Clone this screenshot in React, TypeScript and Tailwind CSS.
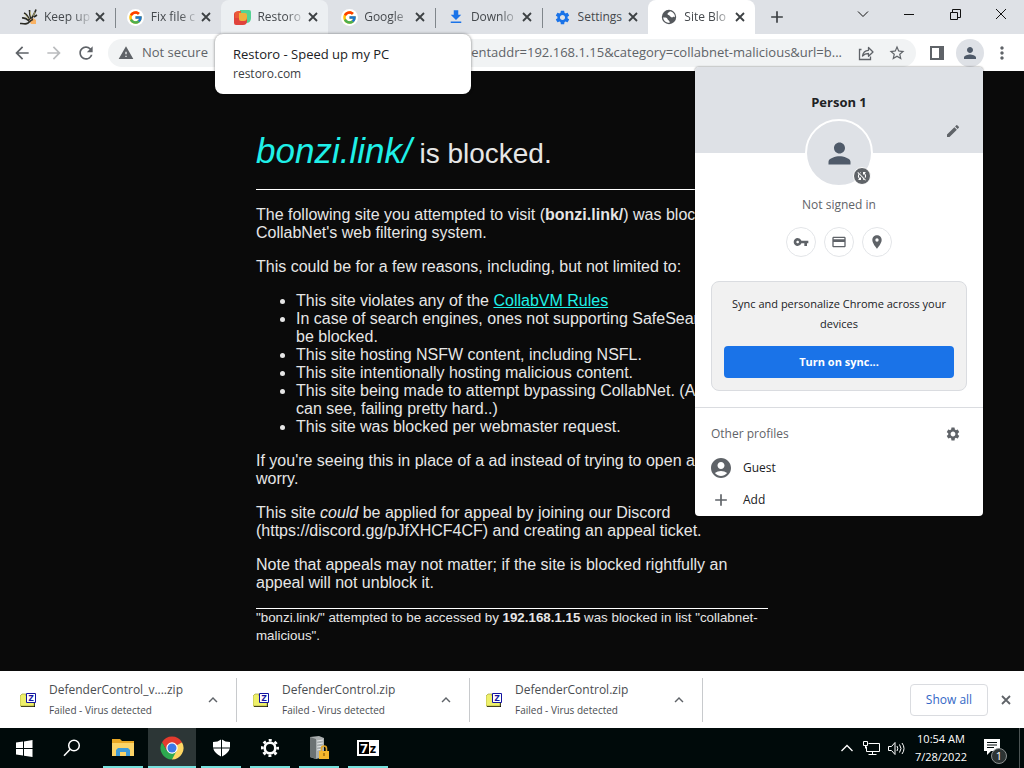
import React from 'react';
import { FcGoogle } from 'react-icons/fc';
import {
  MdAccountCircle, MdAdd, MdArrowBack, MdArrowForward, MdCreditCard, MdEdit, MdFileDownload,
  MdLocationOn, MdMoreVert, MdPerson, MdRefresh, MdSettings, MdStarBorder, MdSyncDisabled,
  MdVpnKey, MdWarning, MdExpandLess
} from 'react-icons/md';

const CloseIcon = () => (
  <svg width="14" height="14" viewBox="0 0 14 14" stroke="currentColor" strokeWidth="1.800">
    <path d="M3 3l8 8M11 3l-8 8" />
  </svg>
);

const GlobeIcon = () => (
  <svg width="16" height="16" viewBox="0 0 16 16">
    <circle cx="8" cy="8" r="7.200" fill="#54585c" />
    <path d="M2 8.500c2 0 4-.3 4.500 1.500S9 11 8.500 14Q3 13.500 2 8.500zM9 2.200c-.5 1.500-2.500 1-2.500 2.800 0 1.200 2 1 2.500 2s2 2 3 1 1.800.5 2 .2Q14 3.500 9 2.200z" fill="#fff" />
  </svg>
);

const BonsaiIcon = () => (
  <svg width="18" height="18" viewBox="0 0 18 18" fill="none">
    <path d="M9 12l4-2 3 2v4h-5z" fill="#f9b264" />
    <path d="M0 15.500c4-.5 5 1.500 8-.5 2-1.500 3-3 5-3.500M2 10c3-.5 5 1 7 3M4 5c3 1 4 4 5.500 7M9.500 2c0 4 .5 6 1.500 9M16 1.500c-1 4-3 5-4 9M14 9l3-2" stroke="#2a2a24" strokeWidth="1.600" />
    <path d="M4.500 6.500c2 1 3 3 4 4.500M10.200 3.500l.8 5M15 4l-2 4" stroke="#e3d98a" strokeWidth=".7" />
  </svg>
);

const RestoroIcon = () => (
  <svg width="17" height="17" viewBox="0 0 17 17">
    <path d="M6 1h9q2 0 2 2v6q0 5-5 5H6z" fill="#55d393" />
    <path d="M2 3h5v5h6v4q0 4-4 4H2q-2 0-2-2V5q0-2 2-2z" fill="#e0433c" />
    <path d="M4 2h3v7H1V5q0-3 3-3z" fill="#ea5a38" />
    <path d="M5 4h6q2 0 2 2v2q0 4-3 4H7q-2 0-2-2z" fill="#efb13d" />
  </svg>
);

const ShareIcon = () => (
  <svg width="16" height="16" viewBox="0 0 16 16" fill="none" stroke="#5f6368" strokeWidth="1.3">
    <path d="M3.500 4.500H1.500v10h11v-3" />
    <path d="M4.500 11c.5-4 2.500-5.500 6-5.700V2.500L15 7l-4.500 4.200V8.500C8 8.500 6 9.200 4.500 11z" strokeLinejoin="round" />
  </svg>
);

const ZipIcon = () => (
  <span className="relative block h-4 w-4">
    <svg width="16" height="16" viewBox="0 0 16 16">
      <path d="M1 15V4l2-2h4v2h8v11z" fill="#111" />
      <path d="M0 14V4l2-2h4v2h8v10z" fill="#eef06a" stroke="#a5a43a" strokeWidth=".7" />
      <path d="M6.500 1.500h9v9h-9z" fill="#fff" stroke="#1414a0" />
    </svg>
    <span className="absolute top-0.5 right-0 w-2.5 text-center text-[9px] leading-2 font-bold text-[#1414a0]">Z</span>
  </span>
);

const WindowsIcon = () => (
  <svg width="17" height="17" viewBox="0 0 17 17" fill="#fff">
    <path d="M0 2.500l7-1V8H0zM8 1.400L16.500 0v8H8zM0 9h7v6.500l-7-1zM8 9h8.500v8L8 15.700z" />
  </svg>
);

const SearchIcon = () => (
  <svg width="18" height="18" viewBox="0 0 18 18" fill="none" stroke="#fff" strokeWidth="1.5">
    <circle cx="11" cy="6.500" r="5.300" />
    <path d="M7.200 10.300L1 16.800" />
  </svg>
);

const FolderIcon = () => (
  <svg width="22" height="20" viewBox="0 0 22 20">
    <path d="M0 1h8l2 2h12v15H0z" fill="#e9a825" />
    <path d="M0 5h22v13H0z" fill="#fcd467" />
    <path d="M4 18v-6l2-2h10l2 2v6h-4v-4H8v4z" fill="#3f9bd8" />
  </svg>
);

const ChromeIcon = () => (
  <svg width="24" height="24" viewBox="0 0 24 24">
    <path d="M12 12L2.040 6.250A11.500 11.500 0 0 1 21.960 6.250z" fill="#e33b2e" />
    <path d="M12 12L21.960 6.250A11.500 11.500 0 0 1 12 23.500z" fill="#fdd663" />
    <path d="M2.040 6.250L7 14.900 12 12V6.500h9.960L22 6.250 12 4z" fill="#e33b2e" />
    <path d="M2.040 6.250L7 14.900l5 2.600 4.500-2.500L12 23.500A11.500 11.500 0 0 1 2.040 6.250z" fill="#2da94f" />
    <circle cx="12" cy="12" r="5.700" fill="#fff" />
    <circle cx="12" cy="12" r="4.500" fill="#3b79e8" />
  </svg>
);

const ShieldIcon = () => (
  <svg width="17" height="18" viewBox="0 0 17 18" fill="#fff">
    <path d="M0 3q5 0 8-2.500V8.500H0zM9 .5Q12 3 17 3v5.500H9zM.2 9.500H8v8Q1.500 14 .2 9.500zM9 9.500h7.800Q15.500 14 9 17.500z" />
  </svg>
);

const GearIcon = () => (
  <svg width="20" height="20" viewBox="-10 -10 20 20" fill="none" stroke="#fff">
    <circle r="5.300" strokeWidth="2.600" />
    <circle r="7.700" strokeWidth="2.600" strokeDasharray="3 3.047" strokeDashoffset="1.500" />
  </svg>
);

const ServerIcon = () => (
  <svg width="22" height="24" viewBox="0 0 22 24">
    <path d="M2 1l9-1 5 2v19l-8 2-6-2z" fill="#a9aeaf" />
    <path d="M2 1l6 2v20l-6-2z" fill="#6c7273" />
    <path d="M9 5l6-1M9 8l6-1M9 11l6-1M9 14l5-1" stroke="#e4e7e7" />
    <path d="M13.500 15v-2.500a2.500 2.500 0 0 1 5 0V15" fill="none" stroke="#e0a526" strokeWidth="1.600" />
    <path d="M11 15h10v8H11z" fill="#f3b62c" />
    <path d="M16 17v3" stroke="#9c6b10" strokeWidth="1.500" />
  </svg>
);

const SevenZipIcon = () => (
  <span className="flex h-4 w-[22px] items-center border-2 border-white bg-white">
    <span className="h-full w-2.5 bg-black text-center text-[13px] leading-3 font-bold text-white">7</span>
    <span className="h-full flex-1 text-center text-[13px] leading-3 font-bold text-black">z</span>
  </span>
);

const tabs = [
  { title: 'Keep up', icon: <BonsaiIcon /> },
  { title: 'Fix file c', icon: <span className="rounded-full bg-white p-px"><FcGoogle size={15} /></span>, divider: true },
  { title: 'Restoro', icon: <RestoroIcon />, hovered: true },
  { title: 'Google', icon: <span className="rounded-full bg-white p-px"><FcGoogle size={15} /></span> },
  { title: 'Downlo', icon: <MdFileDownload size={18} className="text-[#1a73e8]" />, divider: true },
  { title: 'Settings', icon: <MdSettings size={17} className="text-[#1a73e8]" />, divider: true, fits: true },
  { title: 'Site Blo', icon: <GlobeIcon />, active: true }
];

const downloads = ['DefenderControl_v....zip', 'DefenderControl.zip', 'DefenderControl.zip'];

const apps = [
  { name: 'File Explorer', icon: <FolderIcon /> },
  { name: 'Google Chrome', icon: <ChromeIcon />, active: true },
  { name: 'Windows Security', icon: <ShieldIcon /> },
  { name: 'Settings', icon: <GearIcon /> },
  { name: 'Server', icon: <ServerIcon /> },
  { name: '7-Zip', icon: <SevenZipIcon /> }
];

const TabStrip = () => (
  <div className="flex h-[34px] bg-[#dee1e6] pl-2">
    <div className="flex w-[747px] min-w-0">
      {tabs.map((tab, i) => (
        <div
          key={i}
          className={`relative flex min-w-0 flex-1 items-center pr-2 pl-3 ${tab.active ? 'rounded-t-lg bg-white' : ''} ${tab.hovered ? 'rounded-t-lg bg-[#eceff2]' : ''}`}
        >
          {tab.divider && <span className="absolute top-2 left-0 h-5 w-px bg-[#80868b]" />}
          <span className="flex w-[18px] shrink-0 justify-center">{tab.icon}</span>
          <span
            className={`ml-1.5 min-w-0 flex-1 overflow-hidden text-xs whitespace-nowrap text-[#45494d] ${tab.fits ? '' : '[mask-image:linear-gradient(to_right,black_60%,transparent)]'}`}
          >
            {tab.title}
          </span>
          <button aria-label="Close tab" className="text-[#3c4043]"><CloseIcon /></button>
        </div>
      ))}
    </div>
    <button aria-label="New tab" className="ml-3 text-[#3c4043]"><MdAdd size={20} /></button>
    <div className="ml-auto flex h-7 items-center">
      <button aria-label="Search tabs" className="flex w-[46px] justify-center">
        <svg width="12" height="12" viewBox="0 0 12 12" fill="none" stroke="#111"><path d="M1 3.500l5 5 5-5" /></svg>
      </button>
      <button aria-label="Minimize" className="flex w-[46px] justify-center">
        <svg width="10" height="12" viewBox="0 0 10 12" stroke="#111"><path d="M0 6.500h10" /></svg>
      </button>
      <button aria-label="Restore" className="flex w-[46px] justify-center">
        <svg width="11" height="11" viewBox="0 0 11 11" fill="none" stroke="#111"><path d="M.5 3.500h7v7h-7zM2.500 3.500v-3h8v8h-3" /></svg>
      </button>
      <button aria-label="Close" className="flex w-[46px] justify-center">
        <svg width="12" height="12" viewBox="0 0 12 12" stroke="#111"><path d="M1 1l10 10M11 1L1 11" /></svg>
      </button>
    </div>
  </div>
);

const ProfileMenu = () => (
  <div className="absolute top-[33px] right-[41px] z-10 w-72 overflow-hidden rounded-sm bg-white text-xs text-[#202124] shadow-[0_0_2px_rgba(0,0,0,0.6)]">
    <div className="relative h-[86px] bg-[#dee1e6] pt-[26px] text-center">
      <h2 className="text-[13px] leading-[18px] font-bold">Person 1</h2>
      <button aria-label="Edit profile" className="absolute right-[22px] bottom-[14px] text-[#5f6368]"><MdEdit size={16} /></button>
      <div className="absolute top-[52px] left-1/2 flex h-[68px] w-[68px] -translate-x-1/2 items-center justify-center rounded-full border-2 border-white bg-[#dee1e6]">
        <MdPerson size={33} className="text-[#4f5a69]" />
        <span className="absolute right-0 bottom-0 flex h-[18px] w-[18px] items-center justify-center rounded-full border border-white bg-[#5f6368]">
          <MdSyncDisabled size={12} className="text-white" />
        </span>
      </div>
    </div>
    <p className="mt-[42px] text-center leading-5 text-[#5f6368]">Not signed in</p>
    <div className="mt-3 flex justify-center gap-2 text-[#5f6368]">
      <button aria-label="Passwords" className="flex h-[30px] w-[30px] items-center justify-center rounded-full border border-[#e3e5e8]"><MdVpnKey size={16} /></button>
      <button aria-label="Payment methods" className="flex h-[30px] w-[30px] items-center justify-center rounded-full border border-[#e3e5e8]"><MdCreditCard size={16} /></button>
      <button aria-label="Addresses" className="flex h-[30px] w-[30px] items-center justify-center rounded-full border border-[#e3e5e8]"><MdLocationOn size={16} /></button>
    </div>
    <div className="mx-4 mt-6 rounded-lg border border-[#dadce0] bg-[#f1f1f1] p-3 text-center text-[11px]">
      <p className="leading-5">Sync and personalize Chrome across your devices</p>
      <button className="mt-3 h-8 w-full rounded bg-[#1a73e8] font-bold text-white">Turn on sync...</button>
    </div>
    <div className="mt-4 border-t border-[#dadce0] px-4 pt-4">
      <div className="flex h-5 items-center justify-between pr-1.5 text-[#5f6368]">
        <h3>Other profiles</h3>
        <button aria-label="Manage profiles"><MdSettings size={16} className="block" /></button>
      </div>
      <button className="mt-2 flex h-8 w-full items-center gap-2.5">
        <MdAccountCircle size={24} className="-ml-0.5 text-[#5f6368]" />Guest
      </button>
      <button className="flex h-8 w-full items-center gap-3">
        <MdAdd size={20} className="text-[#5f6368]" />Add
      </button>
    </div>
  </div>
);

const Toolbar = () => (
  <div className="relative flex h-[37px] items-center bg-white pr-3 pl-3 text-[#5f6368]">
    <button aria-label="Back"><MdArrowBack size={20} /></button>
    <button aria-label="Forward" className="ml-3 text-[#babcbe]"><MdArrowForward size={20} /></button>
    <button aria-label="Reload" className="ml-3"><MdRefresh size={20} /></button>
    <div className="ml-3 flex h-7 min-w-0 flex-1 items-center rounded-full bg-[#f1f3f4] px-2.5 text-[13px]">
      <MdWarning size={16} className="shrink-0" />
      <span className="ml-2 shrink-0">Not secure</span>
      <input
        aria-label="Address"
        className="ml-4 min-w-0 flex-1 bg-transparent text-right outline-none"
        defaultValue="192.168.1.1/?clientaddr=192.168.1.15&category=collabnet-malicious&url=b..."
      />
      <button aria-label="Share" className="ml-4"><ShareIcon /></button>
      <button aria-label="Bookmark" className="ml-3.5"><MdStarBorder size={18} /></button>
    </div>
    <button aria-label="Side panel" className="ml-3.5">
      <svg width="14" height="14" viewBox="0 0 14 14"><path d="M0 0h14v14H0zM2 2v10h7V2z" fill="#5f6368" fillRule="evenodd" /></svg>
    </button>
    <button aria-label="Profile" className="ml-3 flex h-7 w-7 items-center justify-center rounded-full bg-[#dee1e6] text-[#4f5a69]"><MdPerson size={18} /></button>
    <button aria-label="Menu" className="ml-2"><MdMoreVert size={20} /></button>

    {/* Tab hover card */}
    <div className="absolute top-0 left-[215px] z-10 h-[60px] w-64 rounded-lg bg-white px-[18px] pt-2.5 text-[13px] leading-5 text-[#202124] shadow-[0_0_3px_rgba(0,0,0,0.5)]">
      <p>Restoro - Speed up my PC</p>
      <p className="text-xs leading-5 text-[#3c4043]">restoro.com</p>
    </div>

    <ProfileMenu />
  </div>
);

const BlockedPage = () => (
  <main className="flex-1 bg-[#0a0a0a] font-['Liberation_Sans',Arial,sans-serif] text-base leading-[18px] text-[#e6e6e6]">
    <div className="mx-auto w-1/2 pt-[60px]">
      <h1 className="border-b border-white pb-[15px] text-[28px] leading-10">
        <em className="text-[35px] text-[#1ff0e8]">bonzi.link/</em> is blocked.
      </h1>
      <p className="mt-4">
        The following site you attempted to visit (<b>bonzi.link/</b>) was blocked by CollabNet's web filtering system.
      </p>
      <p className="mt-4">This could be for a few reasons, including, but not limited to:</p>
      <ul className="mt-4 list-disc pl-10">
        <li>This site violates any of the <a href="#" className="text-[#1ff0e8] underline">CollabVM Rules</a></li>
        <li>In case of search engines, ones not supporting SafeSearch will be&nbsp;blocked.</li>
        <li>This site hosting NSFW content, including NSFL.</li>
        <li>This site intentionally hosting malicious content.</li>
        <li>This site being made to attempt bypassing CollabNet. (As you can&nbsp;see, failing pretty hard..)</li>
        <li>This site was blocked per webmaster request.</li>
      </ul>
      <p className="mt-4">If you're seeing this in place of a ad instead of trying to open a site, don't worry.</p>
      <p className="mt-4">
        This site <em>could</em> be applied for appeal by joining our Discord (https://discord.gg/pJfXHCF4CF) and creating an appeal ticket.
      </p>
      <p className="mt-4">Note that appeals may not matter; if the site is blocked rightfully an appeal will not unblock it.</p>
      <hr className="mt-4 border-white" />
      <p className="[font-size:smaller]">
        "bonzi.link/" attempted to be accessed by <b className="font-bold">192.168.1.15</b> was blocked in list "collabnet-malicious".
      </p>
    </div>
  </main>
);

const DownloadShelf = () => (
  <div className="flex h-[57px] items-center bg-white pr-[11px] pl-1">
    {downloads.map((name, i) => (
      <div key={i} className="flex h-11 w-[233px] items-center border-r border-[#c8cacd] pr-3.5 pl-4">
        <ZipIcon />
        <div className="ml-[13px] flex-1 text-[#4a4d51]">
          <p className="text-xs leading-5">{name}</p>
          <p className="text-[10px] leading-5">Failed - Virus detected</p>
        </div>
        <button aria-label="Download options" className="text-[#5f6368]"><MdExpandLess size={18} /></button>
      </div>
    ))}
    <button className="ml-auto h-8 w-[78px] rounded border border-[#dadce0] text-xs font-medium text-[#3367c6]">Show all</button>
    <button aria-label="Close downloads" className="ml-[11px] text-[#5f6368]"><CloseIcon /></button>
  </div>
);

const Taskbar = () => (
  <footer className="flex h-10 bg-[#000a0a] text-[11px] text-white">
    <button aria-label="Start" className="flex w-12 items-center justify-center"><WindowsIcon /></button>
    <button aria-label="Search" className="flex w-12 items-center justify-center"><SearchIcon /></button>
    <div className="ml-[3px] flex gap-px">
      {apps.map((app) => (
        <button
          key={app.name}
          aria-label={app.name}
          className={`relative flex w-12 items-center justify-center ${app.active ? 'bg-[#2c3636]' : ''}`}
        >
          {app.icon}
          <span className={`absolute bottom-0 h-0.5 bg-[#76e0dd] ${app.active ? 'inset-x-0' : 'inset-x-1'}`} />
        </button>
      ))}
    </div>
    <div className="ml-auto flex items-center">
      <svg width="12" height="8" viewBox="0 0 12 8" fill="none" stroke="#fff" strokeWidth="1.300"><path d="M.5 7L6 1.500 11.500 7" /></svg>
      <svg className="ml-2.5" width="17" height="15" viewBox="0 0 17 15" fill="none" stroke="#fff">
        <path d="M5.500 2.500h11v8h-13v-5M9.500 10.500v3M5.500 13.500h8M.5.500h4v4h-4zM2.500 4.500v3" />
      </svg>
      <svg className="ml-2" width="17" height="15" viewBox="0 0 17 15" fill="none" stroke="#fff">
        <path d="M.5 5.500h3l3.500-4v12l-3.500-4h-3zM9 5q1.500 2.500 0 5M11.500 3.500q3 4 0 8M14 2q4 5.500 0 11" />
      </svg>
      <div className="ml-2.5 text-center leading-[18px]">
        <p>10:54 AM</p>
        <p>7/28/2022</p>
      </div>
      <button aria-label="Notifications" className="relative ml-4 h-6 w-6">
        <svg width="24" height="24" viewBox="0 0 24 24"><path d="M1 3h16v12H8l-4 4v-4H1z" fill="#fff" /><path d="M4 6.500h10M4 9h10M4 11.500h7" stroke="#000a0a" /></svg>
        <span className="absolute right-0 -bottom-1 flex h-4 w-4 items-center justify-center rounded-full border border-[#8b9090] bg-[#2c3333]">1</span>
      </button>
      <span className="ml-3 h-10 w-px bg-[#4c5454]" />
      <span className="w-1" />
    </div>
  </footer>
);

export default function App() {
  return (
    <div className="flex min-h-screen flex-col font-['Open_Sans','Segoe_UI',sans-serif]">
      <TabStrip />
      <Toolbar />
      <BlockedPage />
      <DownloadShelf />
      <Taskbar />
    </div>
  );
}
